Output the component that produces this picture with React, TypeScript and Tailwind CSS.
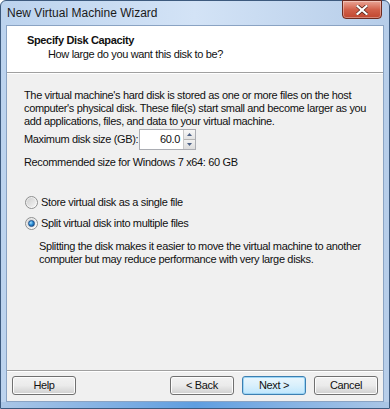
import React from "react";

function Radio({ checked }: { checked?: boolean }) {
  return (
    <span className="relative inline-flex w-[13px] h-[13px] rounded-full border border-[#8e8f8f] bg-gradient-to-br from-[#e6e6e6] to-[#ffffff] items-center justify-center shrink-0">
      <span className="w-[9px] h-[9px] rounded-full bg-gradient-to-br from-[#cfcfcf] to-[#f4f4f4] flex items-center justify-center">
        {checked && (
          <span className="w-[7px] h-[7px] rounded-full bg-[radial-gradient(circle_at_35%_35%,#a8e0ff_0%,#2b8fd8_45%,#0e3f7a_100%)] border border-[#1d4f8a]" />
        )}
      </span>
    </span>
  );
}

function Btn({ label, def }: { label: string; def?: boolean }) {
  return (
    <div
      className={
        "w-[64px] h-[19px] rounded-[3px] border flex items-center justify-center text-[11px] leading-none " +
        (def
          ? "border-[#3c7fb1] bg-gradient-to-b from-[#eaf6fd] via-[#d9f0fc] to-[#bee6fd] shadow-[inset_0_0_0_1px_#9cd5f5]"
          : "border-[#707070] bg-gradient-to-b from-[#f2f2f2] via-[#ebebeb] to-[#cfcfcf] shadow-[inset_0_0_0_1px_#fcfcfc]")
      }
    >
      {label}
    </div>
  );
}

export default function App() {
  return (
    <div className="w-[390px] h-[409px] bg-white font-['Liberation_Sans',Arial,sans-serif] text-[11px] tracking-[-0.35px] text-[#111] overflow-hidden whitespace-nowrap">
      <div className="w-full h-full flex flex-col rounded-t-[6px] border border-[#3d5a7e] bg-gradient-to-r from-[#bcd3ee] via-[#d3e3f6] to-[#b6cde9]">
        {/* title bar */}
        <div className="h-[24px] flex items-start relative">
          <div className="pl-[6px] pt-[6px] text-[12px] leading-none text-[#1a1a1a] tracking-normal">
            New Virtual Machine Wizard
          </div>
          <div className="absolute right-[7px] top-[-1px] w-[40px] h-[19px] rounded-b-[4px] border border-[#6d2a1f] bg-gradient-to-b from-[#e9a596] via-[#d2614b] to-[#c0462f] shadow-[inset_0_0_0_1px_rgba(255,255,255,0.35)] flex items-center justify-center">
            <svg width="12" height="10" viewBox="0 0 12 10">
              <path d="M1.5 1 L10.5 9 M10.5 1 L1.5 9" stroke="#4a1a10" strokeWidth="3.6" strokeLinecap="square" />
              <path d="M1.5 1 L10.5 9 M10.5 1 L1.5 9" stroke="#ffffff" strokeWidth="2.2" strokeLinecap="square" />
            </svg>
          </div>
        </div>
        {/* middle */}
        <div className="flex-1 flex px-[5px]">
          <div className="flex-1 flex flex-col border border-[#8aa3c3] bg-[#f0f0f0]">
            {/* header */}
            <div className="h-[47px] bg-white border-b border-[#a0a0a0] pl-[20px] pt-[8px]">
              <div className="font-bold text-[11px] leading-[13px]">Specify Disk Capacity</div>
              <div className="pl-[21px] leading-[13px] mt-[1px]">How large do you want this disk to be?</div>
            </div>
            <div className="h-px bg-white" />
            {/* body */}
            <div className="flex-1 pl-[17px] pr-[10px] pt-[15px] flex flex-col">
              <p className="leading-[13px]">
                The virtual machine's hard disk is stored as one or more files on the host
                <br />
                computer's physical disk. These file(s) start small and become larger as you
                <br />
                add applications, files, and data to your virtual machine.
              </p>
              <div className="flex items-center mt-[1px] h-[21px]">
                <span className="w-[115px]">Maximum disk size (GB):</span>
                <div className="flex h-[21px] border border-[#abadb3] bg-white">
                  <div className="w-[43px] text-right pr-[3px] leading-[19px]">60.0</div>
                  <div className="w-[12px] flex flex-col border-l border-[#c9c9c9]">
                    <div className="flex-1 flex items-center justify-center bg-gradient-to-b from-[#f7f7f7] to-[#e3e3e3] border-b border-[#b5b5b5]">
                      <svg width="5" height="3" viewBox="0 0 5 3"><path d="M0 3 L2.5 0 L5 3Z" fill="#4d6185" /></svg>
                    </div>
                    <div className="flex-1 flex items-center justify-center bg-gradient-to-b from-[#f1f1f1] to-[#dcdcdc]">
                      <svg width="5" height="3" viewBox="0 0 5 3"><path d="M0 0 L5 0 L2.5 3Z" fill="#4d6185" /></svg>
                    </div>
                  </div>
                </div>
              </div>
              <div className="mt-[6px] leading-[13px]">Recommended size for Windows 7 x64: 60 GB</div>
              <div className="mt-[27px] flex items-center gap-[3px] pl-[1px]">
                <Radio />
                <span className="leading-[13px]">Store virtual disk as a single file</span>
              </div>
              <div className="mt-[8px] flex items-center gap-[3px] pl-[1px]">
                <Radio checked />
                <span className="leading-[13px]">Split virtual disk into multiple files</span>
              </div>
              <p className="mt-[10px] pl-[15px] leading-[13px]">
                Splitting the disk makes it easier to move the virtual machine to another
                <br />
                computer but may reduce performance with very large disks.
              </p>
              <div className="flex-1" />
            </div>
            {/* footer */}
            <div className="border-t border-[#a0a0a0]">
              <div className="border-t border-white h-[30px] flex items-center px-[5px] pb-[2px]">
                <Btn label="Help" />
                <div className="flex-1" />
                <div className="flex gap-[8px]">
                  <Btn label="< Back" />
                  <Btn label="Next >" def />
                  <Btn label="Cancel" />
                </div>
              </div>
            </div>
          </div>
        </div>
        <div className="h-[6px] bg-gradient-to-r from-[#aac6e6] via-[#5f9ee0] to-[#aac6e6]" />
      </div>
    </div>
  );
}
